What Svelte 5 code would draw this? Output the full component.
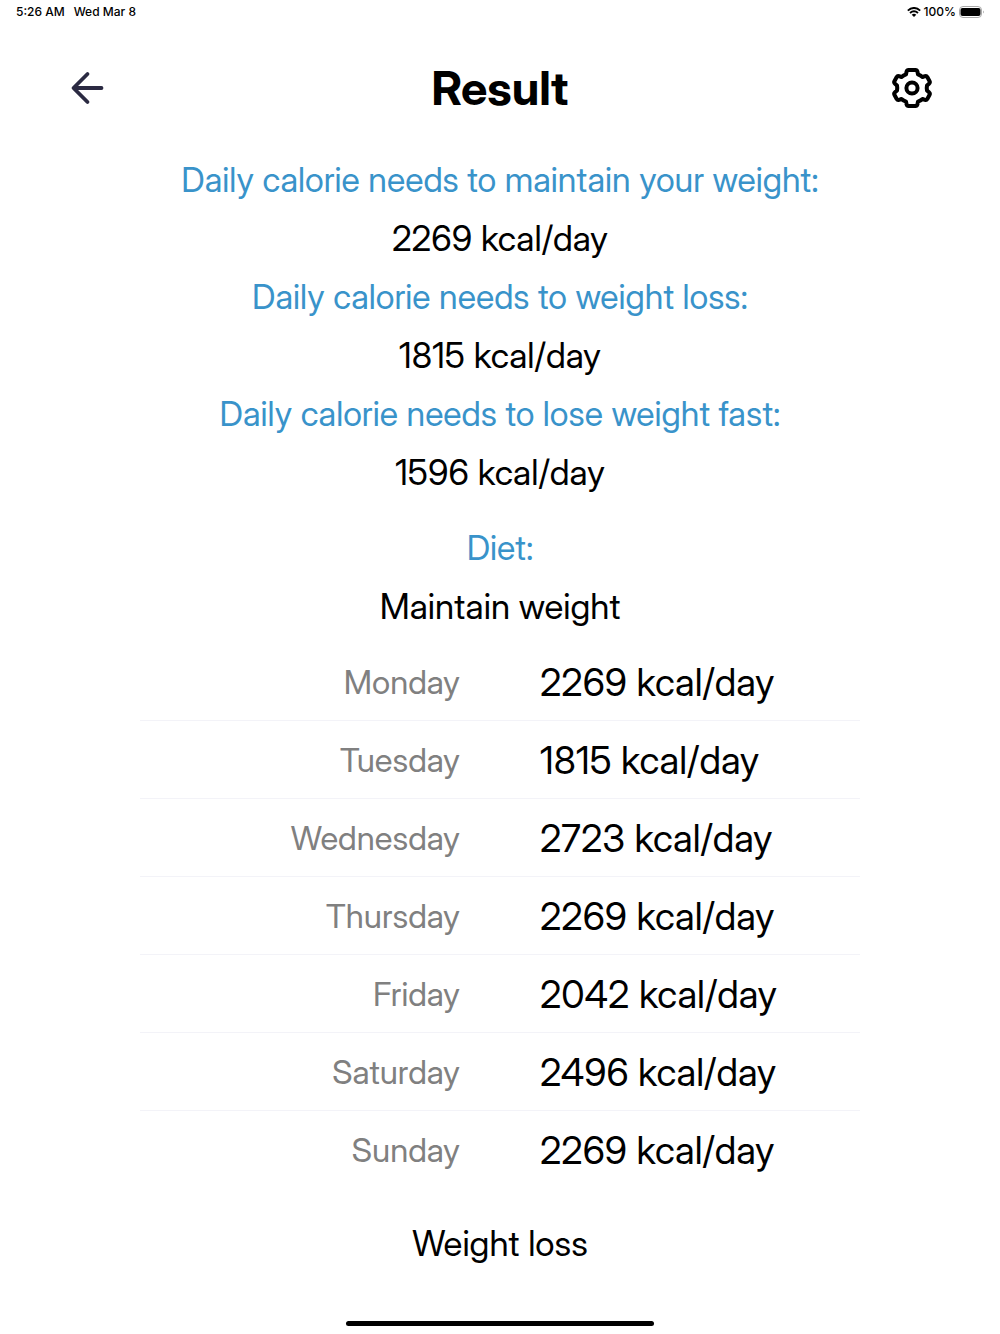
<script>
  const needs = [
    ['Daily calorie needs to maintain your weight:', '2269 kcal/day'],
    ['Daily calorie needs to weight loss:', '1815 kcal/day'],
    ['Daily calorie needs to lose weight fast:', '1596 kcal/day']
  ];
  const days = [
    ['Monday', 2269], ['Tuesday', 1815], ['Wednesday', 2723], ['Thursday', 2269],
    ['Friday', 2042], ['Saturday', 2496], ['Sunday', 2269]
  ];
</script>

<div class="screen">
  <div class="status">
    <div class="group"><span>5:26 AM</span><span>Wed Mar 8</span></div>
    <div class="power">
      <svg class="wifi" viewBox="0 0 14 10" aria-hidden="true">
        <path d="M.8 3.6Q7 -1.7 13.2 3.6M3 6Q7 2.6 11 6" fill="none" stroke="#000" stroke-width="1.9" />
        <path d="M4.7 7.7Q7 6 9.3 7.7L7 10Z" />
      </svg>
      <span>100%</span>
      <svg class="battery" viewBox="0 0 25 12" aria-hidden="true">
        <rect x=".5" y=".5" width="22" height="11" rx="3.5" fill="none" stroke="#aaa" />
        <rect x="1.5" y="2" width="20" height="8" rx="2" />
        <path d="M24 4.5Q25.5 6 24 7.5Z" fill="#999" />
      </svg>
    </div>
  </div>

  <header>
    <button aria-label="Back">
      <svg viewBox="0 0 44 44"><path d="M35.500 22H8M21.500 8L7.500 22L21.500 36" fill="none" stroke="#2b2a42" stroke-width="3.800" stroke-linecap="round" stroke-linejoin="round" /></svg>
    </button>
    <h1>Result</h1>
    <button aria-label="Settings">
      <svg viewBox="0 0 44 44"><g fill="none" stroke="#000" stroke-width="4" stroke-linejoin="round"><path d="M18.500 4H25.500Q27 4 27.400 5.500L28 8.300Q30.500 9.200 32.500 11L35 10.200Q36.500 9.700 37.300 11L39.600 15.200Q40.300 16.500 39 17.700L37 19.500Q36.500 22 37 24.500L39 26.300Q40.300 27.500 39.600 28.800L37.300 33Q36.500 34.300 35 33.800L32.500 33Q30.500 34.800 28 35.700L27.400 38.500Q27 40 25.500 40H18.500Q17 40 16.600 38.500L16 35.700Q13.500 34.800 11.500 33L9 33.800Q7.500 34.300 6.700 33L4.400 28.800Q3.700 27.500 5 26.300L7 24.500Q7.500 22 7 19.500L5 17.700Q3.700 16.500 4.400 15.200L6.700 11Q7.500 9.700 9 10.200L11.500 11Q13.500 9.200 16 8.300L16.600 5.500Q17 4 18.500 4Z" /><circle cx="22" cy="22" r="5.600" /></g></svg>
    </button>
  </header>

  <main>
    <section class="summary">
      {#each needs as [label, value]}
        <h2>{label}</h2>
        <p>{value}</p>
      {/each}
    </section>
    <section class="diet">
      <h2>Diet:</h2>
      <p>Maintain weight</p>
    </section>
    <table>
      <tbody>
        {#each days as [day, amount]}
          <tr><th scope="row">{day}</th><td>{amount} kcal/day</td></tr>
        {/each}
      </tbody>
    </table>
    <p class="next">Weight loss</p>
  </main>
  <div class="home"></div>
</div>

<style>
  :global(body) { margin: 0; background: #fff; }
  .screen { min-height: 100vh; box-sizing: border-box; display: flex; flex-direction: column; color: #000; font-family: "Inter Display", Inter, sans-serif; }
  .status { height: 24px; padding: 0 16px; display: flex; align-items: center; justify-content: space-between; font-family: Inter, sans-serif; font-size: 12px; line-height: 14px; font-weight: 500; }
  .group { display: flex; gap: 9px; }
  .power { display: flex; align-items: center; gap: 3px; }
  .wifi { width: 14px; height: 10px; }
  .battery { width: 25px; height: 12px; }
  header { height: 128px; padding: 0 64px; display: flex; align-items: center; justify-content: space-between; }
  button { width: 48px; height: 48px; padding: 0; border: 0; background: none; display: grid; place-items: center; }
  button svg { width: 44px; height: 44px; }
  h1 { margin: 0; font-size: 47px; line-height: 60px; font-weight: 700; }
  h2, p { margin: 0; font-weight: 400; text-align: center; }
  h2 { color: #3993ca; font-size: 34px; line-height: 42px; }
  p { font-size: 35px; line-height: 43px; }
  main { flex: 1; padding-top: 7px; }
  .summary, .diet { display: grid; gap: 16px; }
  .diet { margin-top: 33px; }
  table { width: 72%; margin: 14px auto 0; border-collapse: collapse; table-layout: fixed; }
  tr { height: 78px; border-bottom: 1px solid #f3f3f8; }
  tr:last-child { border-bottom: 0; }
  th, td { padding: 2px 0 0; font-weight: 400; }
  th { text-align: right; padding-right: 40px; font-size: 33px; color: #808080; }
  td { padding-left: 40px; font-size: 38px; }
  .next { margin-top: 34px; }
  .home { width: 308px; height: 5px; margin: 0 auto 8px; border-radius: 3px; background: #000; }
</style>
